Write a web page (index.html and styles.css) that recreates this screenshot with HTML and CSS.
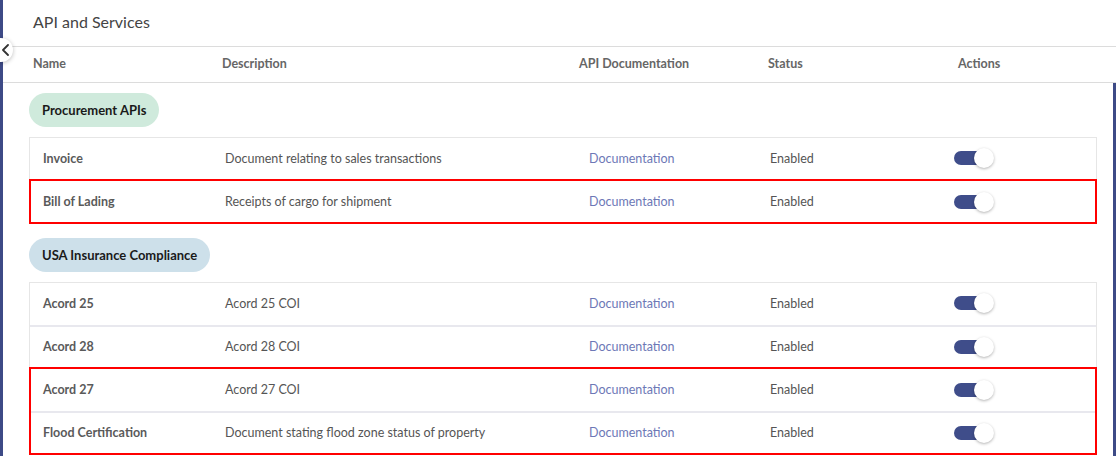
FILE: index.html
```html
<!DOCTYPE html>
<html>
<head>
<meta charset="utf-8">
<link rel="stylesheet" href="styles.css">
</head>
<body>
<div class="page">
  <div class="rail"></div>
  <div class="main">
    <button class="collapse" aria-label="Collapse">
      <svg width="10" height="12" viewBox="0 0 10 12"><path d="M7 1 L2 6 L7 11" fill="none" stroke="#333" stroke-width="1.8" stroke-linecap="round" stroke-linejoin="round"/></svg>
    </button>
    <div class="title">API and Services</div>
    <div class="thead">
      <div>Name</div>
      <div>Description</div>
      <div>API Documentation</div>
      <div>Status</div>
      <div>Actions</div>
    </div>
    <div class="body">
      <div class="groups">
        <section class="group">
          <div class="pill pill-green">Procurement APIs</div>
          <div class="card">
            <div class="row">
              <div class="name">Invoice</div>
              <div class="desc">Document relating to sales transactions</div>
              <div class="doc">Documentation</div>
              <div class="status">Enabled</div>
              <div class="act"><span class="switch"><span class="track"></span><span class="thumb"></span></span></div>
            </div>
            <div class="hl">
              <div class="row">
                <div class="name">Bill of Lading</div>
                <div class="desc">Receipts of cargo for shipment</div>
                <div class="doc">Documentation</div>
                <div class="status">Enabled</div>
                <div class="act"><span class="switch"><span class="track"></span><span class="thumb"></span></span></div>
              </div>
            </div>
          </div>
        </section>
        <section class="group">
          <div class="pill pill-blue">USA Insurance Compliance</div>
          <div class="card">
            <div class="row">
              <div class="name">Acord 25</div>
              <div class="desc">Acord 25 COI</div>
              <div class="doc">Documentation</div>
              <div class="status">Enabled</div>
              <div class="act"><span class="switch"><span class="track"></span><span class="thumb"></span></span></div>
            </div>
            <div class="row">
              <div class="name">Acord 28</div>
              <div class="desc">Acord 28 COI</div>
              <div class="doc">Documentation</div>
              <div class="status">Enabled</div>
              <div class="act"><span class="switch"><span class="track"></span><span class="thumb"></span></span></div>
            </div>
            <div class="hl">
              <div class="row">
                <div class="name">Acord 27</div>
                <div class="desc">Acord 27 COI</div>
                <div class="doc">Documentation</div>
                <div class="status">Enabled</div>
                <div class="act"><span class="switch"><span class="track"></span><span class="thumb"></span></span></div>
              </div>
              <div class="row">
                <div class="name">Flood Certification</div>
                <div class="desc">Document stating flood zone status of property</div>
                <div class="doc">Documentation</div>
                <div class="status">Enabled</div>
                <div class="act"><span class="switch"><span class="track"></span><span class="thumb"></span></span></div>
              </div>
            </div>
          </div>
        </section>
      </div>
      <div class="edge"></div>
    </div>
  </div>
</div>
</body>
</html>
```

FILE: styles.css
```css
* { box-sizing: border-box; }
html, body { margin: 0; padding: 0; height: 100%; overflow: hidden; }
body {
  font-family: Lato, "Open Sans", "Liberation Sans", sans-serif;
  background: #fff;
  color: #555;
}
.page { display: flex; height: 456px; }
.rail { width: 3px; background: #3d4a86; flex: none; }
.main { flex: 1; position: relative; display: flex; flex-direction: column; min-width: 0; }
.collapse {
  position: absolute;
  left: -14px;
  top: 38px;
  width: 24px;
  height: 24px;
  border-radius: 50%;
  border: none;
  background: #fff;
  box-shadow: 0 1px 4px rgba(0,0,0,0.25);
  padding: 0 0 0 9px;
  display: flex;
  align-items: center;
  justify-content: flex-start;
  z-index: 2;
}
.collapse svg { display: block; margin-left: 3px; }
.title {
  flex: none;
  height: 47px;
  padding: 12px 0 0 30px;
  font-size: 16px;
  color: #444;
  border-bottom: 1px solid #dcdcdc;
}
.thead {
  flex: none;
  height: 36px;
  display: grid;
  grid-template-columns: 189px 357px 189px 190px 1fr;
  align-items: center;
  padding: 0 0 2px 30px;
  font-size: 12.5px;
  font-weight: bold;
  color: #666;
  border-bottom: 1px solid #dcdcdc;
}
.body { flex: 1; display: flex; min-height: 0; }
.groups { width: 1094px; padding: 10px 0 0 26px; }
.edge { margin-left: auto; width: 3px; background: #3d4a86; }
.group { margin-bottom: 14px; }
.pill {
  display: inline-flex;
  align-items: center;
  height: 34px;
  padding: 0 13px 1px;
  border-radius: 17px;
  font-size: 13px;
  font-weight: bold;
  color: #1a1a1a;
  margin-bottom: 10px;
}
.pill-green { background: #cfeadc; }
.pill-blue { background: #cde0ea; }
.card { border: 1px solid #e6e6e6; }
.row {
  height: 43px;
  display: grid;
  grid-template-columns: 182px 364px 181px 184px 1fr;
  align-items: center;
  padding: 0 0 2px 13px;
  font-size: 12.5px;
  border-top: 2px solid #e8e8ee;
}
.card > .row:first-child { border-top: none; height: 42px; }
.name { font-weight: bold; color: #5a5a5a; }
.desc { color: #555; }
.doc { color: #6d78b6; }
.status { color: #555; }
.hl { outline: 2px solid #f00; outline-offset: -1px; position: relative; }
.hl .row:first-child { border-top-color: transparent; }
.act { display: flex; }
.switch { position: relative; width: 40px; height: 20px; display: inline-block; }
.track {
  position: absolute; left: 0; top: 3px;
  width: 34px; height: 14px;
  border-radius: 7px;
  background: #3f4d8a;
}
.thumb {
  position: absolute; left: 20px; top: 0;
  width: 20px; height: 20px; border-radius: 50%;
  background: #fff;
  box-shadow: 0 1px 3px rgba(0,0,0,0.3);
}
```
